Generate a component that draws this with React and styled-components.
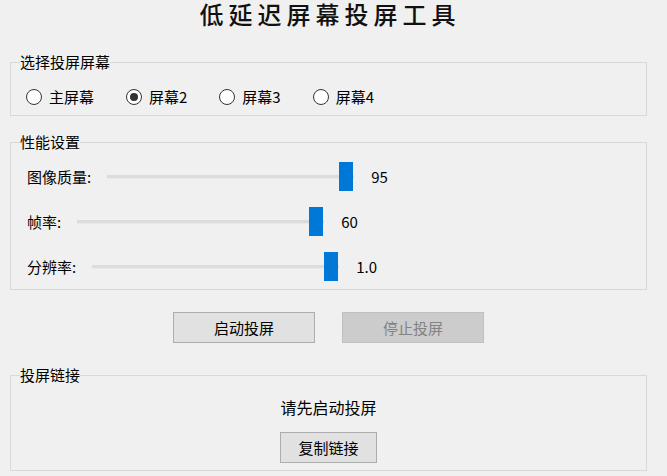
import React from "react";
import styled, { createGlobalStyle } from "styled-components";

const GlobalStyle = createGlobalStyle`
  html, body {
    margin: 0;
    padding: 0;
    background: #f0f0f0;
  }
  body {
    font-family: "Noto Sans CJK SC", "Noto Sans", sans-serif;
    color: #000;
  }
`;

const Page = styled.div`
  width: 657px;
  display: flex;
  flex-direction: column;
  font-family: "Noto Sans CJK SC", "Noto Sans", sans-serif;
`;

const Title = styled.h1`
  margin: 0 0 26px;
  padding-left: 3px;
  font-size: 24px;
  line-height: 28px;
  font-weight: 500;
  letter-spacing: 5px;
  text-align: center;
  color: #111;
`;

const Group = styled.fieldset`
  margin: ${(p) => p.$top || 0}px 10px 0;
  padding: 0;
  min-width: 0;
  border: 1px solid #d9d9d9;
`;

const Legend = styled.legend`
  margin-left: 9px;
  padding: 0;
  font-size: 15px;
  line-height: 16px;
  color: #000;
`;

const RadioRow = styled.div`
  display: flex;
  gap: 32px;
  padding: 18px 0 10px 15px;
`;

const RadioItem = styled.label`
  display: flex;
  align-items: center;
  gap: 7px;
  height: 17px;
  font-size: 15px;
  line-height: 17px;
`;

const RadioCircle = styled.span`
  box-sizing: border-box;
  width: 16px;
  height: 16px;
  border-radius: 50%;
  border: 1px solid #333;
  background: #fff;
  display: flex;
  align-items: center;
  justify-content: center;
  &::after {
    content: "";
    width: 8px;
    height: 8px;
    border-radius: 50%;
    background: ${(p) => (p.$checked ? "#333" : "transparent")};
  }
`;

const SliderList = styled.div`
  display: flex;
  flex-direction: column;
  padding: 4px 0 0 16px;
`;

const SliderRow = styled.div`
  display: flex;
  align-items: center;
  height: 45px;
`;

const SliderLabel = styled.span`
  font-size: 15px;
  line-height: 17px;
  margin-right: 16px;
`;

const Scale = styled.div`
  position: relative;
  width: 247px;
  height: 29px;
  &::before {
    content: "";
    position: absolute;
    left: 0;
    right: 0;
    top: 13px;
    height: 3px;
    background: #dcdcdc;
    border-bottom: 1px solid #e9e9e9;
  }
`;

const Thumb = styled.span`
  position: absolute;
  top: 0;
  width: 14px;
  height: 29px;
  background: #0078d7;
`;

const SliderValue = styled.span`
  margin-left: 17px;
  font-size: 15px;
  line-height: 17px;
`;

const ButtonRow = styled.div`
  display: flex;
  justify-content: center;
  gap: 27px;
  margin-top: 22px;
`;

const Button = styled.button`
  box-sizing: border-box;
  width: ${(p) => p.$w || 142}px;
  height: 31px;
  margin: 0;
  padding: 0;
  border: 1px solid #adadad;
  background: #e1e1e1;
  font-family: inherit;
  font-size: 15px;
  line-height: 17px;
  color: #000;
  &:disabled {
    background: #cccccc;
    border-color: #bfbfbf;
    color: #838383;
  }
`;

const LinkBody = styled.div`
  display: flex;
  flex-direction: column;
  align-items: center;
  gap: 15px;
  padding: 14px 0 7px;
`;

const Status = styled.div`
  font-size: 16px;
  line-height: 20px;
`;

const screens = ["主屏幕", "屏幕2", "屏幕3", "屏幕4"];
const sliders = [
  { label: "图像质量:", value: "95", ratio: 1 },
  { label: "帧率:", value: "60", ratio: 1 },
  { label: "分辨率:", value: "1.0", ratio: 1 },
];

export default function App() {
  return (
    <>
      <GlobalStyle />
      <Page>
        <Title>低延迟屏幕投屏工具</Title>

        <Group>
          <Legend>选择投屏屏幕</Legend>
          <RadioRow>
            {screens.map((s, i) => (
              <RadioItem key={s}>
                <RadioCircle $checked={i === 1} />
                {s}
              </RadioItem>
            ))}
          </RadioRow>
        </Group>

        <Group $top={18}>
          <Legend>性能设置</Legend>
          <SliderList>
            {sliders.map((s) => (
              <SliderRow key={s.label}>
                <SliderLabel>{s.label}</SliderLabel>
                <Scale>
                  <Thumb style={{ left: `${s.ratio * 232}px` }} />
                </Scale>
                <SliderValue>{s.value}</SliderValue>
              </SliderRow>
            ))}
          </SliderList>
        </Group>

        <ButtonRow>
          <Button>启动投屏</Button>
          <Button disabled>停止投屏</Button>
        </ButtonRow>

        <Group $top={24}>
          <Legend>投屏链接</Legend>
          <LinkBody>
            <Status>请先启动投屏</Status>
            <Button $w={97}>复制链接</Button>
          </LinkBody>
        </Group>
      </Page>
    </>
  );
}
